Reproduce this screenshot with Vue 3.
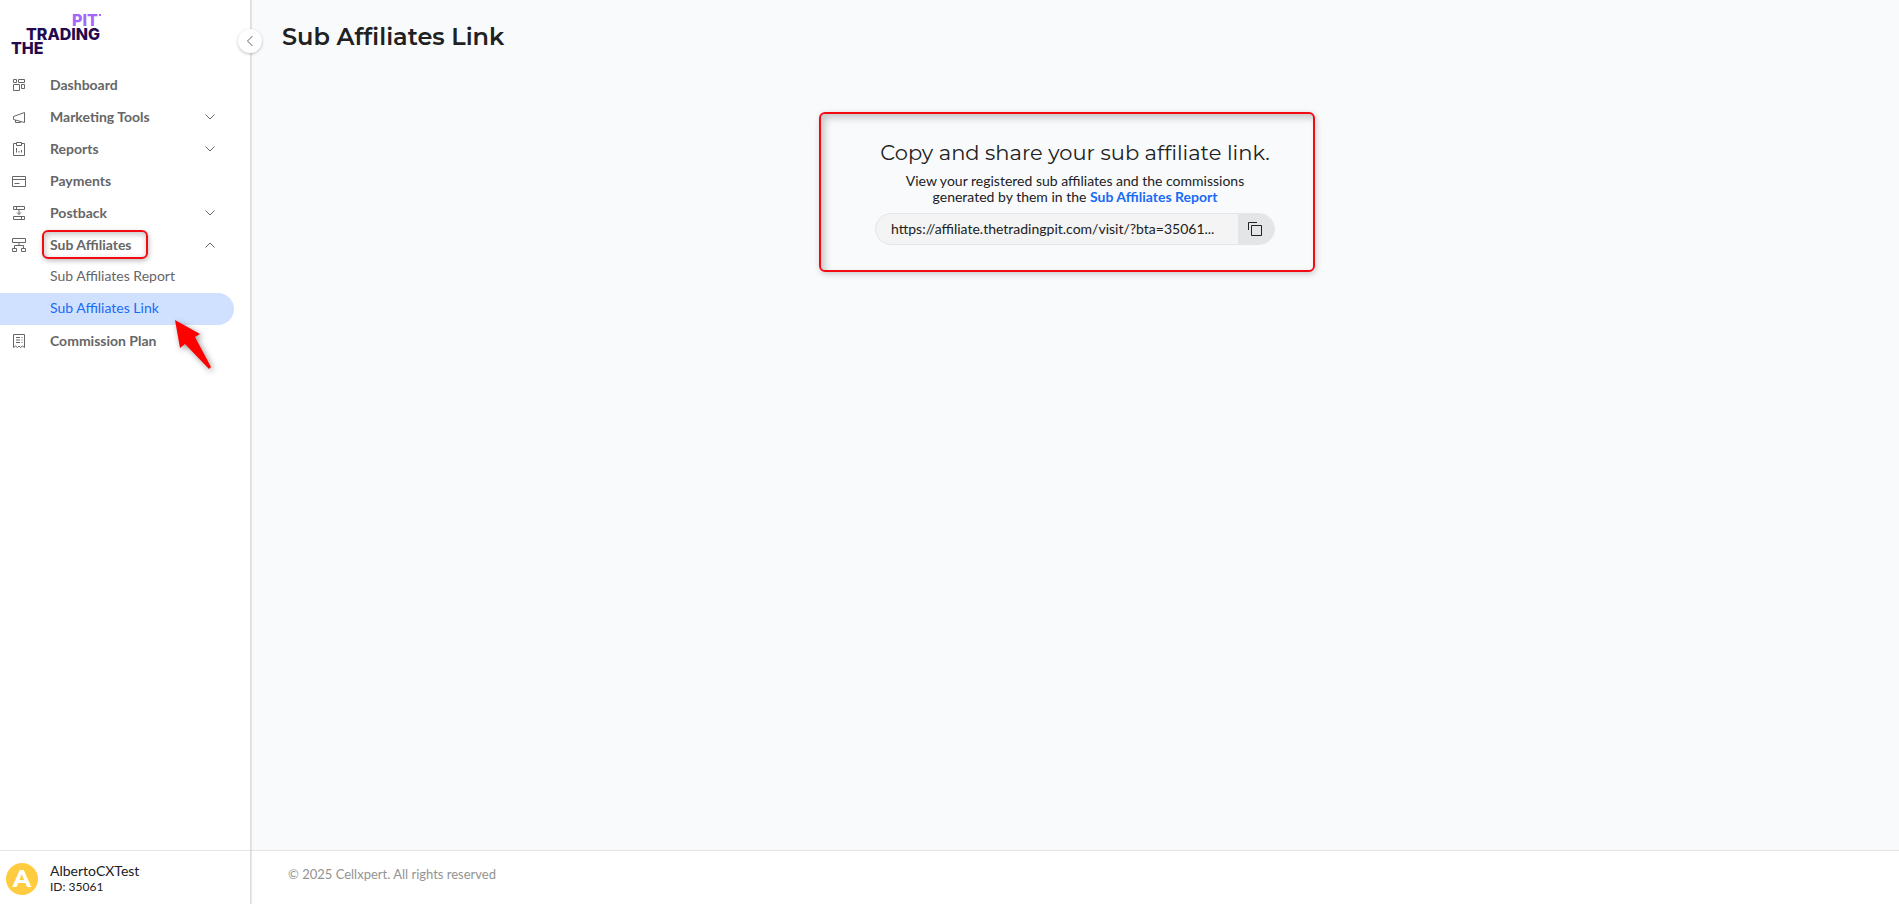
<template>

<div class="page">

  <aside class="sidebar">
    <button class="collapse" aria-label="Collapse menu">
      <svg width="8" height="12" viewBox="0 0 8 12"><path d="M6.5 1L1.5 6l5 5" /></svg>
    </button>

    <a href="#" class="logo" aria-label="The Trading Pit">
      <span class="pit">PIT<i></i></span>
      <span class="trading">TRADING</span>
      <span class="the">THE</span>
    </a>

    <nav>
      <ul class="menu">
        <li v-for="item in menu" :key="item.name">
          <a v-if="!item.arrow" href="#" class="item">
            <svg class="icon" width="16" height="16" viewBox="0 0 16 16"><path :d="item.icon" /></svg>
            <span class="label">{{ item.name }}</span>
          </a>
          <button v-else class="item" :aria-expanded="item.open" @click="item.open = !item.open">
            <svg class="icon" width="16" height="16" viewBox="0 0 16 16"><path :d="item.icon" /></svg>
            <span class="label" :class="{ marked: item.marked }">{{ item.name }}</span>
            <svg class="chevron" :class="{ up: item.open }" width="12" height="8" viewBox="0 0 12 8"><path d="M1.5 1.5L6 6l4.5-4.5" /></svg>
          </button>

          <ul v-if="item.open" class="submenu">
            <li v-for="sub in item.children" :key="sub.name">
              <a href="#" :class="{ active: sub.active }">{{ sub.name }}</a>
              <svg v-if="sub.active" class="pointer" width="48" height="62" viewBox="0 0 48 62">
                <path d="M5 4L30 18L25 21L41 51L39 53L15 28L10 32Z" />
              </svg>
            </li>
          </ul>
        </li>
      </ul>
    </nav>

    <div class="user">
      <span class="avatar">A</span>
      <div>
        <div class="username">AlbertoCXTest</div>
        <div class="userid">ID: 35061</div>
      </div>
    </div>
  </aside>

  <div class="content">
    <main>
      <h1>Sub Affiliates Link</h1>

      <section class="share">
        <h2>Copy and share your sub affiliate link.</h2>
        <p>View your registered sub affiliates and the commissions generated by them in the <a href="#">Sub Affiliates Report</a></p>
        <div class="copy">
          <input type="text" readonly :value="link" aria-label="Sub affiliate link">
          <button aria-label="Copy link" @click="copyLink">
            <svg width="16" height="16" viewBox="0 0 16 16"><path d="M4.5 4.5h10v10h-10zM1.5 9V1.5H10" /></svg>
          </button>
        </div>
        <div class="highlight"></div>
      </section>
    </main>

    <footer>© 2025 Cellxpert. All rights reserved</footer>
  </div>

</div>

</template>


<script setup>

import { ref } from 'vue';

const link = ref('https://affiliate.thetradingpit.com/visit/?bta=35061...')

// sidebar entries, icons are drawn on a 16x16 grid
const menu = ref([
  { name: 'Dashboard', icon: 'M2.5 2.5h3v3h-3zM7.5 2.5h6v3h-6zM2.5 7.5h6v6h-6zM10.5 7.5h3v4h-3z' },
  { name: 'Marketing Tools', arrow: true, open: false, icon: 'M13.5 3.5v10L2.5 10.500v-3zM4.5 11v2.5h5V12.500' },
  { name: 'Reports', arrow: true, open: false, icon: 'M5.5 2.5h-3v12h11v-12h-3M5.5 1.5h5v3h-5zM5.5 7v4.5M8 10v1.5M10.5 9v2.5' },
  { name: 'Payments', icon: 'M1.5 3.5h13v10h-13zM1.5 6.5h13M3.5 10.5h5' },
  { name: 'Postback', arrow: true, open: false, icon: 'M2.5 1.5h11v3h-11zM5.5 1.5v3M2.5 11.5h11v3h-11zM10.5 11.5v3M8 4.5v5M6 7.5l2 2 2-2' },
  {
    name: 'Sub Affiliates',
    arrow: true,
    open: true,
    marked: true,
    icon: 'M1.5 1.5h13v4h-13zM8 5.5v3M3.5 11.5v-3h9v3M1.5 11.5h4v3h-4zM10.5 11.5h4v3h-4z',
    children: [
      { name: 'Sub Affiliates Report' },
      { name: 'Sub Affiliates Link', active: true }
    ]
  },
  { name: 'Commission Plan', icon: 'M2.5 14.5V1.5h11V14.500l-2-1.5-2 1.5L8 13l-1.5 1.5-2-1.5zM5 4.5h4M5 7h4M5 9.5h4M10.5 4.5h1M10.5 7h1M10.5 9.5h1' }
])

const copyLink = () => {
  navigator.clipboard.writeText(link.value)
}

</script>


<style>
body {
  margin: 0;
  font-family: Lato, "Open Sans", sans-serif;
  font-size: 14px;
  color: #212121;
}
</style>

<style scoped>
* {
  box-sizing: border-box;
}

button, input {
  font: inherit;
  color: inherit;
  border: none;
  background: none;
  padding: 0;
}

button {
  cursor: pointer;
}

a {
  text-decoration: none;
}

ul {
  list-style: none;
  margin: 0;
  padding: 0;
}

svg {
  display: block;
  fill: none;
  stroke: #666;
}

.page {
  display: flex;
  min-height: 100vh;
}

/* sidebar */
.sidebar {
  position: relative;
  display: flex;
  flex-direction: column;
  flex: 0 0 251px;
  background: #fff;
  border-right: 1px solid #dcdddf;
  box-shadow: 1px 0 1px rgba(0, 0, 0, 0.08);
}

.collapse {
  position: absolute;
  top: 29px;
  right: -12px;
  width: 24px;
  height: 24px;
  display: flex;
  align-items: center;
  justify-content: center;
  border-radius: 50%;
  background: #fff;
  box-shadow: 0 1px 3px rgba(0, 0, 0, 0.25);
}

.logo {
  display: flex;
  flex-direction: column;
  width: 110px;
  height: 69px;
  padding: 13px 0 0 11px;
  font: 800 16px/14px Inter, sans-serif;
  color: #24094f;
}

.pit {
  display: flex;
  padding-left: 61px;
  color: #a566ff;
}

.pit i {
  width: 2px;
  height: 2px;
  margin: 1px;
  background: #a566ff;
}

.trading {
  padding-left: 15px;
}

.menu {
  color: #666;
}

.item {
  display: flex;
  align-items: center;
  width: 100%;
  height: 32px;
  padding: 0 34px 0 11px;
  font-weight: 700;
  color: #666;
  text-align: left;
}

.icon {
  margin-right: 23px;
}

.label {
  margin-bottom: 2px;
}

.chevron {
  margin-left: auto;
}

.chevron.up {
  transform: rotate(180deg);
}

.marked {
  margin: 0 -8px 2px;
  padding: 4px 14px 4px 6px;
  border: 2px solid #f40b12;
  border-radius: 6px;
  line-height: 17px;
  box-shadow: 1px 2px 5px rgba(0, 0, 0, 0.25), inset 1px 2px 6px rgba(0, 0, 0, 0.25);
}

.submenu li {
  position: relative;
}

.submenu a {
  display: block;
  width: 234px;
  padding: 0 0 2px 50px;
  line-height: 30px;
  color: #666;
  border-radius: 0 16px 16px 0;
}

.submenu a.active {
  background: #d0e1ff;
  color: #196af5;
}

.pointer {
  position: absolute;
  left: 170px;
  top: 23px;
  z-index: 1;
  fill: #f00;
  stroke: none;
  filter: drop-shadow(2px 2px 3px rgba(0, 0, 0, 0.4));
}

.user {
  display: flex;
  align-items: center;
  gap: 12px;
  height: 54px;
  margin-top: auto;
  padding: 2px 6px 0;
  border-top: 1px solid #e3e4e6;
}

.avatar {
  width: 32px;
  height: 32px;
  border-radius: 50%;
  background: #ffcc40;
  color: #fff;
  font: 700 24px/32px Montserrat, Inter, sans-serif;
  text-align: center;
}

.username {
  line-height: 16px;
}

.userid {
  font-size: 12px;
  line-height: 16px;
}

/* content */
.content {
  display: flex;
  flex-direction: column;
  flex: 1;
  min-width: 0;
  background: #f8fafc;
}

main {
  flex: 1;
  padding: 21px 31px;
}

h1, h2 {
  margin: 0;
  font-family: Montserrat, Inter, sans-serif;
}

h1 {
  font-size: 24px;
  line-height: 32px;
  font-weight: 600;
}

.share {
  position: relative;
  width: 400px;
  margin: 87px auto 0;
  text-align: center;
}

h2 {
  font-size: 21px;
  line-height: 26px;
  font-weight: 400;
  white-space: nowrap;
}

p {
  width: 370px;
  margin: 7px auto 8px;
  line-height: 16px;
}

p a {
  font-weight: 700;
  color: #196af5;
}

.copy {
  display: flex;
  height: 32px;
  border: 1px solid #e4e5e7;
  border-radius: 16px;
  background: #f4f4f4;
  overflow: hidden;
}

.copy input {
  flex: 1;
  min-width: 0;
  padding: 0 0 2px 15px;
}

.copy button {
  display: flex;
  align-items: center;
  padding: 0 11px 0 9px;
  width: 36px;
  background: #e4e5e7;
}

.copy svg {
  flex: none;
  stroke: #212121;
}

.highlight {
  position: absolute;
  top: -28px;
  left: -56px;
  width: 496px;
  height: 160px;
  border: 2px solid #f40b12;
  border-radius: 6px;
  box-shadow: 1px 2px 6px rgba(0, 0, 0, 0.2), inset 4px 4px 7px rgba(0, 0, 0, 0.2);
  pointer-events: none;
}

footer {
  height: 54px;
  padding-left: 37px;
  border-top: 1px solid #e3e4e6;
  background: #fff;
  font-size: 13px;
  line-height: 47px;
  color: #939393;
}
</style>
